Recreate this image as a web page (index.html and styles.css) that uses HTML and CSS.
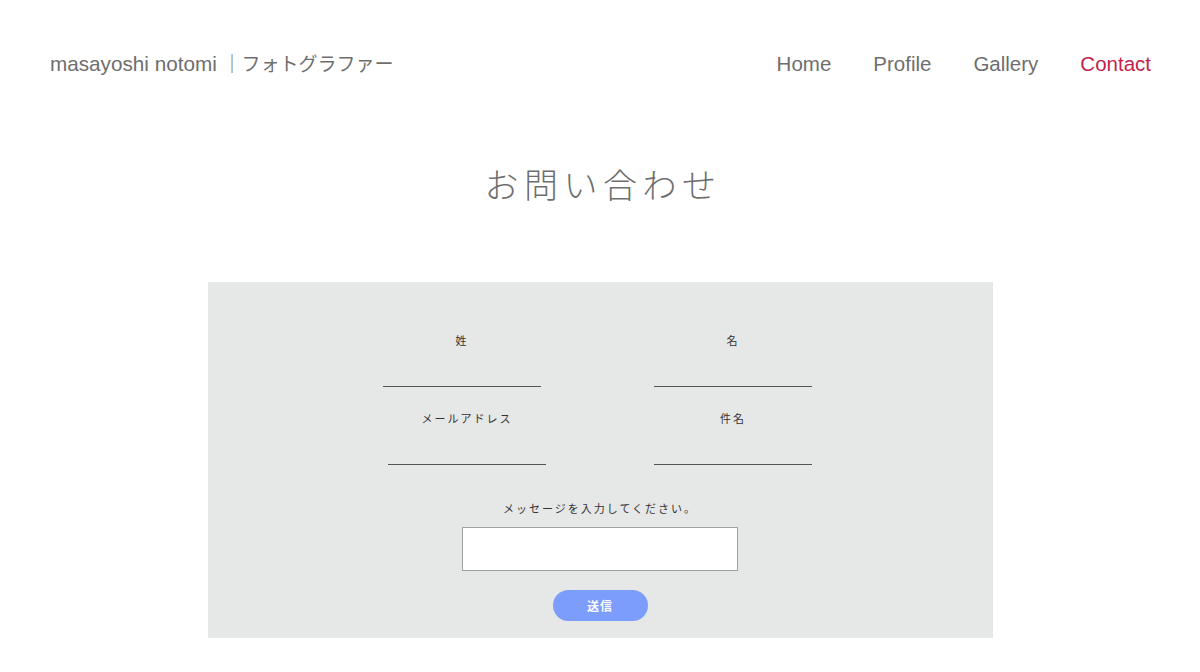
FILE: index.html
```html
<!DOCTYPE html>
<html lang="ja">
<head>
    <meta charset="UTF-8">
    <meta name="viewport" content="width=device-width, initial-scale=1.0">
    <title>お問い合わせ | masayoshi notomi</title>
    <link rel="stylesheet" href="styles.css">
</head>
<body>
    <header class="site-header">
        <div class="logo">masayoshi notomi <span class="logo-sub">｜フォトグラファー</span></div>
        <nav class="site-nav">
            <a href="#">Home</a>
            <a href="#">Profile</a>
            <a href="#">Gallery</a>
            <a href="#" class="active">Contact</a>
        </nav>
    </header>

    <main class="content">
        <h1 class="page-title">お問い合わせ</h1>

        <form class="contact-form" onsubmit="return false;">
            <div class="field-grid">
                <div class="field">
                    <label for="last-name">姓</label>
                    <input type="text" id="last-name">
                </div>
                <div class="field">
                    <label for="first-name">名</label>
                    <input type="text" id="first-name">
                </div>
                <div class="field field-shift">
                    <label for="email">メールアドレス</label>
                    <input type="email" id="email">
                </div>
                <div class="field">
                    <label for="subject">件名</label>
                    <input type="text" id="subject">
                </div>
            </div>

            <div class="message">
                <label for="message">メッセージを入力してください。</label>
                <textarea id="message"></textarea>
            </div>

            <button type="submit" class="send-btn">送信</button>
        </form>
    </main>
</body>
</html>
```

FILE: styles.css
```css
body {
    margin: 0;
    font-family: 'Liberation Sans', 'Noto Sans CJK JP', sans-serif;
    background: #fff;
    color: #6e6e6e;
}

.site-header {
    display: flex;
    justify-content: space-between;
    align-items: center;
    height: 124px;
    padding: 0 49px 0 50px;
}

.logo {
    font-size: 20.7px;
    color: #6e6e6e;
}

.logo-sub {
    font-size: 19px;
}

.site-nav {
    display: flex;
    gap: 42px;
    margin-top: 4px;
}

.site-nav a {
    text-decoration: none;
    color: #6e6e6e;
    font-size: 20.5px;
}

.site-nav a.active {
    color: #c2224a;
}

.content {
    display: flex;
    flex-direction: column;
    align-items: center;
}

.page-title {
    margin: 30px 0 0;
    padding-left: 6px;
    font-family: 'Noto Sans CJK JP', sans-serif;
    font-weight: 300;
    font-size: 34px;
    letter-spacing: 5.5px;
    line-height: 60px;
    color: #6e6e6e;
}

.contact-form {
    margin-top: 68px;
    width: 785px;
    box-sizing: border-box;
    background: #e6e7e7;
    padding: 50px 0 17px;
    display: flex;
    flex-direction: column;
    align-items: center;
}

.field-grid {
    display: grid;
    grid-template-columns: 158px 158px;
    column-gap: 113px;
    row-gap: 23px;
    margin-left: -5px;
}

.field {
    display: flex;
    flex-direction: column;
    align-items: center;
}

.field-shift {
    margin-left: 5px;
    margin-right: -5px;
}

label {
    font-family: 'Noto Sans CJK JP', sans-serif;
    font-size: 11px;
    line-height: 16px;
    letter-spacing: 2px;
    color: #333;
}

.field input {
    width: 100%;
    box-sizing: border-box;
    height: 39px;
    border: none;
    border-bottom: 1px solid #555;
    background: transparent;
    outline: none;
}

.message {
    margin-top: 35px;
    display: flex;
    flex-direction: column;
    align-items: center;
}

.message textarea {
    margin-top: 11px;
    width: 276px;
    height: 44px;
    box-sizing: border-box;
    border: 1px solid #a0a0a0;
    background: #fff;
    resize: none;
    display: block;
}

.send-btn {
    margin-top: 19px;
    width: 95px;
    height: 31px;
    border: none;
    border-radius: 16px;
    background: #7c9dfc;
    color: #fff;
    font-family: 'Noto Sans CJK JP', sans-serif;
    font-weight: bold;
    font-size: 12px;
    letter-spacing: 1px;
    cursor: pointer;
}
```
